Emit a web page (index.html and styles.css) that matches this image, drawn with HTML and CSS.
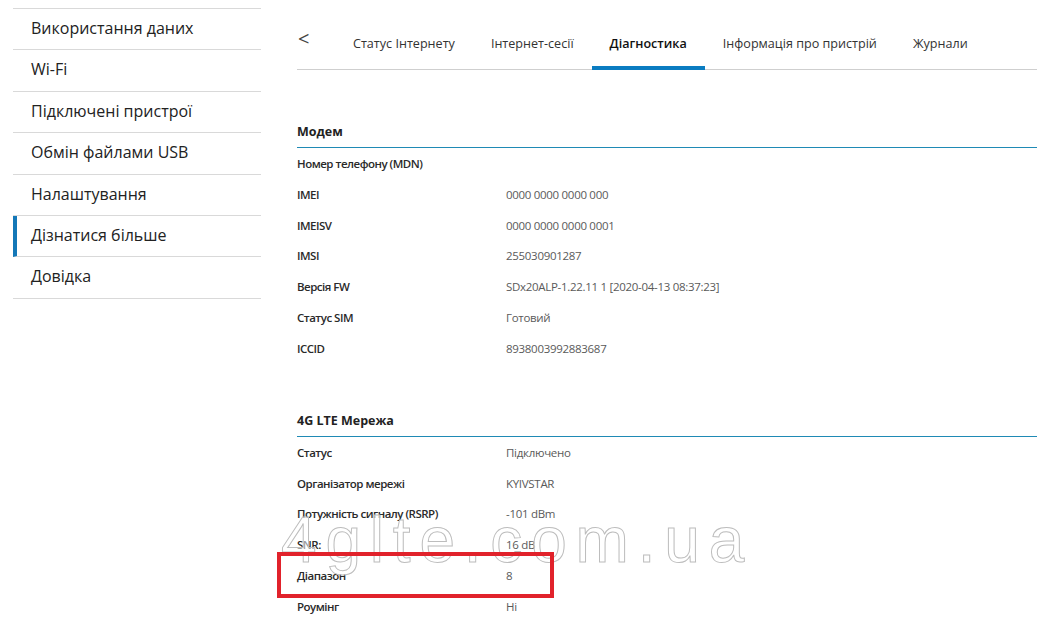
FILE: index.html
```html
<!DOCTYPE html>
<html>
	<head>
		<meta charset="utf-8">
		<link rel="stylesheet" href="styles.css">
	</head>
	<body>
		<div class="page">
			<ul class="side-menu">
				<li class="side-item">Використання даних</li>
				<li class="side-item">Wi-Fi</li>
				<li class="side-item">Підключені пристрої</li>
				<li class="side-item">Обмін файлами USB</li>
				<li class="side-item">Налаштування</li>
				<li class="side-item side-item-active">Дізнатися більше</li>
				<li class="side-item">Довідка</li>
			</ul>

			<div class="content">
				<div class="tabs">
					<span class="tab-back">&lt;</span>
					<span class="tab">Статус Інтернету</span>
					<span class="tab">Інтернет-сесії</span>
					<span class="tab tab-active">Діагностика</span>
					<span class="tab">Інформація про пристрій</span>
					<span class="tab">Журнали</span>
				</div>

				<div class="section">
					<div class="section-title">Модем</div>
					<div class="row"><span class="label">Номер телефону (MDN)</span><span class="value"></span></div>
					<div class="row"><span class="label">IMEI</span><span class="value">0000 0000 0000 000</span></div>
					<div class="row"><span class="label">IMEISV</span><span class="value">0000 0000 0000 0001</span></div>
					<div class="row"><span class="label">IMSI</span><span class="value">255030901287</span></div>
					<div class="row"><span class="label">Версія FW</span><span class="value">SDx20ALP-1.22.11 1 [2020-04-13 08:37:23]</span></div>
					<div class="row"><span class="label">Статус SIM</span><span class="value">Готовий</span></div>
					<div class="row"><span class="label">ICCID</span><span class="value">8938003992883687</span></div>
				</div>

				<div class="section">
					<div class="section-title">4G LTE Мережа</div>
					<div class="row"><span class="label">Статус</span><span class="value">Підключено</span></div>
					<div class="row"><span class="label">Організатор мережі</span><span class="value">KYIVSTAR</span></div>
					<div class="row"><span class="label">Потужність сигналу (RSRP)</span><span class="value">-101 dBm</span></div>
					<div class="row"><span class="label">SNR:</span><span class="value">16 dB</span></div>
					<div class="row"><span class="label">Діапазон</span><span class="value">8</span></div>
					<div class="row"><span class="label">Роумінг</span><span class="value">Ні</span></div>
				</div>
			</div>
		</div>

		<div class="watermark">4glte.com.ua</div>
		<div class="highlight"></div>
	</body>
</html>
```

FILE: styles.css
```css
body {
	margin: 0;
	background: #fff;
	font-family: 'Open Sans', sans-serif;
	color: #222;
	overflow: hidden;
}

.page {
	display: flex;
	align-items: flex-start;
}

/* left menu */

.side-menu {
	list-style: none;
	margin: 8px 0 0 13px;
	padding: 0;
	width: 248px;
	flex-shrink: 0;
	border-top: 1px solid #d9d9d9;
}

.side-item {
	height: 40.4px;
	line-height: 38px;
	padding-left: 18px;
	font-size: 16px;
	color: #222;
	border-bottom: 1px solid #d9d9d9;
}

.side-item-active {
	border-left: 4px solid #1478b8;
	padding-left: 14px;
}

/* main area */

.content {
	margin-left: 36px;
	flex: 1;
}

.tabs {
	display: flex;
	align-items: center;
	height: 48px;
	margin-top: 21px;
	border-bottom: 1px solid #cfcfcf;
	font-size: 12.6px;
	color: #333;
}

.tab-back {
	width: 38px;
	font-size: 20px;
	color: #444;
	margin-top: -14px;
	padding-left: 1px;
	box-sizing: border-box;
}

.tab {
	height: 100%;
	display: flex;
	align-items: center;
	padding: 0 18px;
	box-sizing: border-box;
	white-space: nowrap;
	margin-top: -4px;
}

.tab-active {
	font-weight: 600;
	color: #111;
	border-bottom: 4px solid #0a7cc1;
	margin-top: 0;
	margin-bottom: -1px;
	height: calc(100% + 1px);
}

.section {
	padding-top: 52px;
}

.section + .section {
	padding-top: 47px;
}

.section-title {
	font-size: 12.5px;
	font-weight: 700;
	color: #222;
	line-height: 20px;
	padding-bottom: 5px;
	border-bottom: 1.5px solid #1f8ab5;
}

.row {
	display: flex;
	height: 30.83px;
	align-items: center;
	font-size: 11.5px;
}

.label {
	width: 209px;
	flex-shrink: 0;
	font-weight: 600;
	color: #2a2a2a;
	letter-spacing: -0.5px;
}

.value {
	color: #5a5a5a;
	letter-spacing: -0.3px;
}

/* overlays */

.watermark {
	position: absolute;
	left: 281px;
	top: 500px;
	font-family: 'Liberation Sans', sans-serif;
	font-size: 64px;
	letter-spacing: 8.8px;
	line-height: 80px;
	color: rgba(255, 255, 255, 0.55);
	-webkit-text-stroke: 1px #bdbdbd;
	pointer-events: none;
}

.highlight {
	position: absolute;
	left: 277px;
	top: 552px;
	width: 269px;
	height: 38px;
	border: 4px solid #e1222b;
}
```
